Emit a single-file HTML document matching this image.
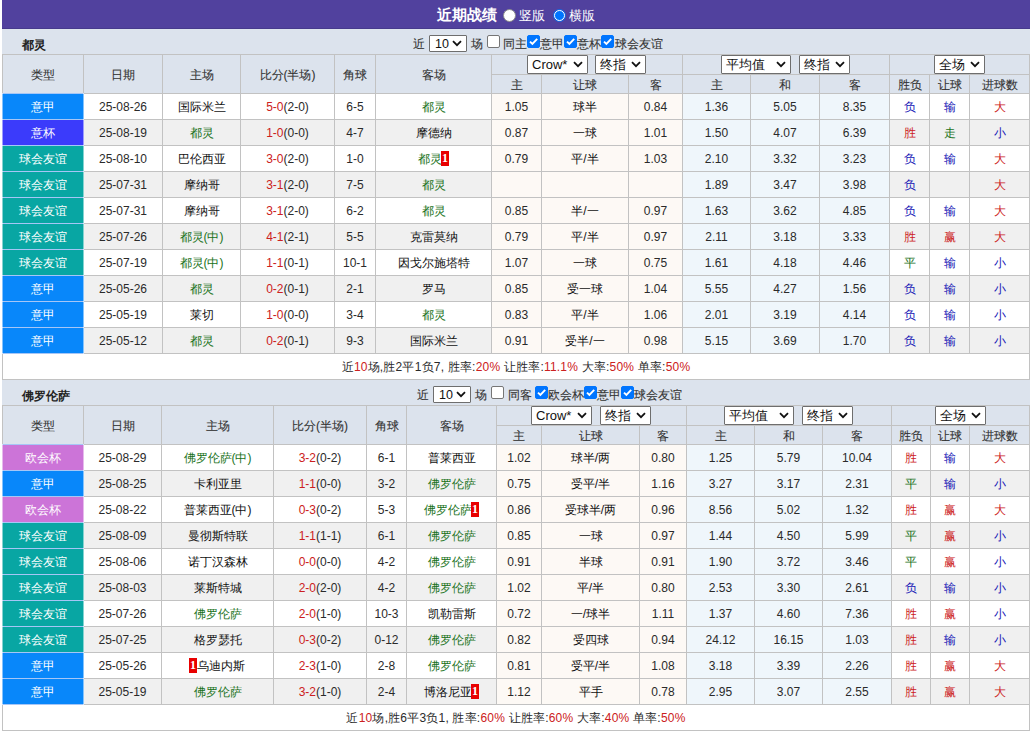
<!DOCTYPE html><html><head><meta charset="utf-8"><style>
*{margin:0;padding:0;box-sizing:border-box}
html,body{width:1030px;height:732px;overflow:hidden;background:#fff}
body{position:relative;font-family:"Liberation Sans",sans-serif;font-size:12px;color:#333}
body>div{position:absolute}
.tn{font-weight:bold;color:#222;font-size:12px;line-height:14px;white-space:nowrap}
.tx{color:#333;-webkit-text-stroke:0.1px;line-height:14px;white-space:nowrap}
.hc{text-align:center;color:#333;-webkit-text-stroke:0.1px;white-space:nowrap;position:absolute}
.dc{text-align:center;white-space:nowrap;overflow:hidden;color:#2a2a2a}
.cj{color:#111}
.tw{color:#fff}
.sm{letter-spacing:0.2px}
.g{color:#197219}
.rc{display:inline-block;background:#e80000;color:#fff;font-weight:bold;font-family:'Liberation Serif',serif;font-size:12px;line-height:15px;height:15px;width:8px;text-align:center;vertical-align:1px;margin-left:-1px}
.sel{position:absolute;background:#fff;border:1px solid #6e6e6e;border-radius:1px;font-size:13px;color:#111;white-space:nowrap}
.sel .sl{position:absolute;left:4px;top:0px;line-height:17px}
.sel .chev{position:absolute;right:4px;top:5px}
.s10 .sl{left:5px;line-height:16px;font-size:12.5px;letter-spacing:0}
.s10 .chev{top:4px}
.cb{position:absolute;width:13px;height:13px;border:1px solid #767676;border-radius:2px;background:#fff}
.cb.on{background:#0075ff;border-color:#0075ff}
.cb svg{position:absolute;left:-1px;top:-1px}
</style></head><body><div style="left:2px;top:0px;width:1028px;height:29px;background:#51419e"></div>
<div style="left:2px;top:28px;width:1028px;height:1px;background:#463a8c"></div>
<div style="left:2px;top:29px;width:1028px;height:1px;background:#e2defb"></div>
<div style="left:437px;top:6px;color:#fff;font-weight:bold;font-size:15px;line-height:18px;white-space:nowrap">近期战绩</div>
<div style="left:503px;top:9px;width:13px;height:13px;border-radius:50%;background:#fff;border:1px solid #8a8a8a"></div>
<div style="left:519px;top:8px;color:#fff;font-size:13px;line-height:16px;white-space:nowrap">竖版</div>
<div style="left:553px;top:9px;width:13px;height:13px;border-radius:50%;background:#1a66e0"><div style="position:absolute;left:1px;top:1px;width:11px;height:11px;border-radius:50%;border:1.5px solid #fff;background:#0075ff"></div></div>
<div style="left:569px;top:8px;color:#fff;font-size:13px;line-height:16px;white-space:nowrap">横版</div>
<div style="left:2px;top:29px;width:1028px;height:25px;background:#dce3ed"></div>
<div class="tn" style="left:22px;top:38px">都灵</div>
<div class="tx" style="left:413px;top:37px">近</div>
<div class="sel s10" style="left:429px;top:35px;width:38px;height:17px;"><span class="sl">10</span><svg class="chev" width="10" height="7" viewBox="0 0 10 7"><path d="M1 1.2 L5 5.2 L9 1.2" fill="none" stroke="#111" stroke-width="1.8"/></svg></div>
<div class="tx" style="left:471px;top:37px">场</div>
<div class="cb" style="left:487px;top:35px"></div>
<div class="tx" style="left:503px;top:37px">同主</div>
<div class="cb on" style="left:527px;top:35px"><svg width="13" height="13" viewBox="0 0 13 13"><path d="M3 6.6 L5.4 9 L10.2 3.8" fill="none" stroke="#fff" stroke-width="1.9"/></svg></div>
<div class="tx" style="left:540px;top:37px">意甲</div>
<div class="cb on" style="left:564px;top:35px"><svg width="13" height="13" viewBox="0 0 13 13"><path d="M3 6.6 L5.4 9 L10.2 3.8" fill="none" stroke="#fff" stroke-width="1.9"/></svg></div>
<div class="tx" style="left:577px;top:37px">意杯</div>
<div class="cb on" style="left:601px;top:35px"><svg width="13" height="13" viewBox="0 0 13 13"><path d="M3 6.6 L5.4 9 L10.2 3.8" fill="none" stroke="#fff" stroke-width="1.9"/></svg></div>
<div class="tx" style="left:615px;top:37px">球会友谊</div>
<div style="left:2px;top:54px;width:1028px;height:39px;background:#dce3ed"></div>
<div class="hc" style="left:3px;top:56px;width:80px;height:37px;line-height:38px">类型</div>
<div class="hc" style="left:84px;top:56px;width:78px;height:37px;line-height:38px">日期</div>
<div class="hc" style="left:163px;top:56px;width:77px;height:37px;line-height:38px">主场</div>
<div class="hc" style="left:241px;top:56px;width:93px;height:37px;line-height:38px">比分(半场)</div>
<div class="hc" style="left:335px;top:56px;width:40px;height:37px;line-height:38px">角球</div>
<div class="hc" style="left:376px;top:56px;width:115px;height:37px;line-height:38px">客场</div>
<div class="hc" style="left:492px;top:76px;width:49px;height:17px;line-height:18px">主</div>
<div class="hc" style="left:542px;top:76px;width:86px;height:17px;line-height:18px">让球</div>
<div class="hc" style="left:629px;top:76px;width:53px;height:17px;line-height:18px">客</div>
<div class="hc" style="left:683px;top:76px;width:67px;height:17px;line-height:18px">主</div>
<div class="hc" style="left:751px;top:76px;width:68px;height:17px;line-height:18px">和</div>
<div class="hc" style="left:820px;top:76px;width:69px;height:17px;line-height:18px">客</div>
<div class="hc" style="left:890px;top:76px;width:39px;height:17px;line-height:18px">胜负</div>
<div class="hc" style="left:930px;top:76px;width:39px;height:17px;line-height:18px">让球</div>
<div class="hc" style="left:970px;top:76px;width:59px;height:17px;line-height:18px">进球数</div>
<div class="sel" style="left:527px;top:55px;width:61px;height:19px;"><span class="sl">Crow*</span><svg class="chev" width="10" height="7" viewBox="0 0 10 7"><path d="M1 1.2 L5 5.2 L9 1.2" fill="none" stroke="#111" stroke-width="1.8"/></svg></div>
<div class="sel" style="left:595px;top:55px;width:51px;height:19px;"><span class="sl">终指</span><svg class="chev" width="10" height="7" viewBox="0 0 10 7"><path d="M1 1.2 L5 5.2 L9 1.2" fill="none" stroke="#111" stroke-width="1.8"/></svg></div>
<div class="sel" style="left:721px;top:55px;width:70px;height:19px;"><span class="sl">平均值</span><svg class="chev" width="10" height="7" viewBox="0 0 10 7"><path d="M1 1.2 L5 5.2 L9 1.2" fill="none" stroke="#111" stroke-width="1.8"/></svg></div>
<div class="sel" style="left:799px;top:55px;width:51px;height:19px;"><span class="sl">终指</span><svg class="chev" width="10" height="7" viewBox="0 0 10 7"><path d="M1 1.2 L5 5.2 L9 1.2" fill="none" stroke="#111" stroke-width="1.8"/></svg></div>
<div class="sel" style="left:934px;top:55px;width:51px;height:19px;"><span class="sl">全场</span><svg class="chev" width="10" height="7" viewBox="0 0 10 7"><path d="M1 1.2 L5 5.2 L9 1.2" fill="none" stroke="#111" stroke-width="1.8"/></svg></div>
<div class="dc cj" style="left:3px;top:94px;width:80px;height:25px;line-height:27px;background:#0887fa"><span class="tw">意甲</span></div>
<div class="dc" style="left:84px;top:94px;width:78px;height:25px;line-height:27px;background:#fff">25-08-26</div>
<div class="dc cj" style="left:163px;top:94px;width:77px;height:25px;line-height:27px;background:#fff"><span class="">国际米兰</span></div>
<div class="dc" style="left:241px;top:94px;width:93px;height:25px;line-height:27px;background:#fff"><span style="color:#cc2020">5-0</span>(2-0)</div>
<div class="dc" style="left:335px;top:94px;width:40px;height:25px;line-height:27px;background:#fff">6-5</div>
<div class="dc cj" style="left:376px;top:94px;width:115px;height:25px;line-height:27px;background:#fff"><span class="g">都灵</span></div>
<div class="dc" style="left:492px;top:94px;width:49px;height:25px;line-height:27px;background:#fdf9f5">1.05</div>
<div class="dc cj" style="left:542px;top:94px;width:86px;height:25px;line-height:27px;background:#fdf9f5">球半</div>
<div class="dc" style="left:629px;top:94px;width:53px;height:25px;line-height:27px;background:#fdf9f5">0.84</div>
<div class="dc" style="left:683px;top:94px;width:67px;height:25px;line-height:27px;background:#eff6fb">1.36</div>
<div class="dc" style="left:751px;top:94px;width:68px;height:25px;line-height:27px;background:#eff6fb">5.05</div>
<div class="dc" style="left:820px;top:94px;width:69px;height:25px;line-height:27px;background:#eff6fb">8.35</div>
<div class="dc cj" style="left:890px;top:94px;width:39px;height:25px;line-height:27px;background:#fff"><span style="color:#1515b5">负</span></div>
<div class="dc cj" style="left:930px;top:94px;width:39px;height:25px;line-height:27px;background:#fff"><span style="color:#1515b5">输</span></div>
<div class="dc cj" style="left:970px;top:94px;width:59px;height:25px;line-height:27px;background:#fff"><span style="color:#cc2020">大</span></div>
<div class="dc cj" style="left:3px;top:120px;width:80px;height:25px;line-height:27px;background:#3b3bfb"><span class="tw">意杯</span></div>
<div class="dc" style="left:84px;top:120px;width:78px;height:25px;line-height:27px;background:#f0f0f0">25-08-19</div>
<div class="dc cj" style="left:163px;top:120px;width:77px;height:25px;line-height:27px;background:#f0f0f0"><span class="g">都灵</span></div>
<div class="dc" style="left:241px;top:120px;width:93px;height:25px;line-height:27px;background:#f0f0f0"><span style="color:#cc2020">1-0</span>(0-0)</div>
<div class="dc" style="left:335px;top:120px;width:40px;height:25px;line-height:27px;background:#f0f0f0">4-7</div>
<div class="dc cj" style="left:376px;top:120px;width:115px;height:25px;line-height:27px;background:#f0f0f0"><span class="">摩德纳</span></div>
<div class="dc" style="left:492px;top:120px;width:49px;height:25px;line-height:27px;background:#fdf9f5">0.87</div>
<div class="dc cj" style="left:542px;top:120px;width:86px;height:25px;line-height:27px;background:#fdf9f5">一球</div>
<div class="dc" style="left:629px;top:120px;width:53px;height:25px;line-height:27px;background:#fdf9f5">1.01</div>
<div class="dc" style="left:683px;top:120px;width:67px;height:25px;line-height:27px;background:#eff6fb">1.50</div>
<div class="dc" style="left:751px;top:120px;width:68px;height:25px;line-height:27px;background:#eff6fb">4.07</div>
<div class="dc" style="left:820px;top:120px;width:69px;height:25px;line-height:27px;background:#eff6fb">6.39</div>
<div class="dc cj" style="left:890px;top:120px;width:39px;height:25px;line-height:27px;background:#f0f0f0"><span style="color:#cc2020">胜</span></div>
<div class="dc cj" style="left:930px;top:120px;width:39px;height:25px;line-height:27px;background:#f0f0f0"><span style="color:#197219">走</span></div>
<div class="dc cj" style="left:970px;top:120px;width:59px;height:25px;line-height:27px;background:#f0f0f0"><span style="color:#1515b5">小</span></div>
<div class="dc cj" style="left:3px;top:146px;width:80px;height:25px;line-height:27px;background:#08a6a3"><span class="tw">球会友谊</span></div>
<div class="dc" style="left:84px;top:146px;width:78px;height:25px;line-height:27px;background:#fff">25-08-10</div>
<div class="dc cj" style="left:163px;top:146px;width:77px;height:25px;line-height:27px;background:#fff"><span class="">巴伦西亚</span></div>
<div class="dc" style="left:241px;top:146px;width:93px;height:25px;line-height:27px;background:#fff"><span style="color:#cc2020">3-0</span>(2-0)</div>
<div class="dc" style="left:335px;top:146px;width:40px;height:25px;line-height:27px;background:#fff">1-0</div>
<div class="dc cj" style="left:376px;top:146px;width:115px;height:25px;line-height:27px;background:#fff"><span class="g">都灵<b class="rc">1</b></span></div>
<div class="dc" style="left:492px;top:146px;width:49px;height:25px;line-height:27px;background:#fdf9f5">0.79</div>
<div class="dc cj" style="left:542px;top:146px;width:86px;height:25px;line-height:27px;background:#fdf9f5">平/半</div>
<div class="dc" style="left:629px;top:146px;width:53px;height:25px;line-height:27px;background:#fdf9f5">1.03</div>
<div class="dc" style="left:683px;top:146px;width:67px;height:25px;line-height:27px;background:#eff6fb">2.10</div>
<div class="dc" style="left:751px;top:146px;width:68px;height:25px;line-height:27px;background:#eff6fb">3.32</div>
<div class="dc" style="left:820px;top:146px;width:69px;height:25px;line-height:27px;background:#eff6fb">3.23</div>
<div class="dc cj" style="left:890px;top:146px;width:39px;height:25px;line-height:27px;background:#fff"><span style="color:#1515b5">负</span></div>
<div class="dc cj" style="left:930px;top:146px;width:39px;height:25px;line-height:27px;background:#fff"><span style="color:#1515b5">输</span></div>
<div class="dc cj" style="left:970px;top:146px;width:59px;height:25px;line-height:27px;background:#fff"><span style="color:#cc2020">大</span></div>
<div class="dc cj" style="left:3px;top:172px;width:80px;height:25px;line-height:27px;background:#08a6a3"><span class="tw">球会友谊</span></div>
<div class="dc" style="left:84px;top:172px;width:78px;height:25px;line-height:27px;background:#f0f0f0">25-07-31</div>
<div class="dc cj" style="left:163px;top:172px;width:77px;height:25px;line-height:27px;background:#f0f0f0"><span class="">摩纳哥</span></div>
<div class="dc" style="left:241px;top:172px;width:93px;height:25px;line-height:27px;background:#f0f0f0"><span style="color:#cc2020">3-1</span>(2-0)</div>
<div class="dc" style="left:335px;top:172px;width:40px;height:25px;line-height:27px;background:#f0f0f0">7-5</div>
<div class="dc cj" style="left:376px;top:172px;width:115px;height:25px;line-height:27px;background:#f0f0f0"><span class="g">都灵</span></div>
<div class="dc" style="left:492px;top:172px;width:49px;height:25px;line-height:27px;background:#fdf9f5"></div>
<div class="dc cj" style="left:542px;top:172px;width:86px;height:25px;line-height:27px;background:#fdf9f5"></div>
<div class="dc" style="left:629px;top:172px;width:53px;height:25px;line-height:27px;background:#fdf9f5"></div>
<div class="dc" style="left:683px;top:172px;width:67px;height:25px;line-height:27px;background:#eff6fb">1.89</div>
<div class="dc" style="left:751px;top:172px;width:68px;height:25px;line-height:27px;background:#eff6fb">3.47</div>
<div class="dc" style="left:820px;top:172px;width:69px;height:25px;line-height:27px;background:#eff6fb">3.98</div>
<div class="dc cj" style="left:890px;top:172px;width:39px;height:25px;line-height:27px;background:#f0f0f0"><span style="color:#1515b5">负</span></div>
<div class="dc cj" style="left:930px;top:172px;width:39px;height:25px;line-height:27px;background:#f0f0f0"><span style="color:#333"></span></div>
<div class="dc cj" style="left:970px;top:172px;width:59px;height:25px;line-height:27px;background:#f0f0f0"><span style="color:#cc2020">大</span></div>
<div class="dc cj" style="left:3px;top:198px;width:80px;height:25px;line-height:27px;background:#08a6a3"><span class="tw">球会友谊</span></div>
<div class="dc" style="left:84px;top:198px;width:78px;height:25px;line-height:27px;background:#fff">25-07-31</div>
<div class="dc cj" style="left:163px;top:198px;width:77px;height:25px;line-height:27px;background:#fff"><span class="">摩纳哥</span></div>
<div class="dc" style="left:241px;top:198px;width:93px;height:25px;line-height:27px;background:#fff"><span style="color:#cc2020">3-1</span>(2-0)</div>
<div class="dc" style="left:335px;top:198px;width:40px;height:25px;line-height:27px;background:#fff">6-2</div>
<div class="dc cj" style="left:376px;top:198px;width:115px;height:25px;line-height:27px;background:#fff"><span class="g">都灵</span></div>
<div class="dc" style="left:492px;top:198px;width:49px;height:25px;line-height:27px;background:#fdf9f5">0.85</div>
<div class="dc cj" style="left:542px;top:198px;width:86px;height:25px;line-height:27px;background:#fdf9f5">半/一</div>
<div class="dc" style="left:629px;top:198px;width:53px;height:25px;line-height:27px;background:#fdf9f5">0.97</div>
<div class="dc" style="left:683px;top:198px;width:67px;height:25px;line-height:27px;background:#eff6fb">1.63</div>
<div class="dc" style="left:751px;top:198px;width:68px;height:25px;line-height:27px;background:#eff6fb">3.62</div>
<div class="dc" style="left:820px;top:198px;width:69px;height:25px;line-height:27px;background:#eff6fb">4.85</div>
<div class="dc cj" style="left:890px;top:198px;width:39px;height:25px;line-height:27px;background:#fff"><span style="color:#1515b5">负</span></div>
<div class="dc cj" style="left:930px;top:198px;width:39px;height:25px;line-height:27px;background:#fff"><span style="color:#1515b5">输</span></div>
<div class="dc cj" style="left:970px;top:198px;width:59px;height:25px;line-height:27px;background:#fff"><span style="color:#cc2020">大</span></div>
<div class="dc cj" style="left:3px;top:224px;width:80px;height:25px;line-height:27px;background:#08a6a3"><span class="tw">球会友谊</span></div>
<div class="dc" style="left:84px;top:224px;width:78px;height:25px;line-height:27px;background:#f0f0f0">25-07-26</div>
<div class="dc cj" style="left:163px;top:224px;width:77px;height:25px;line-height:27px;background:#f0f0f0"><span class="g">都灵(中)</span></div>
<div class="dc" style="left:241px;top:224px;width:93px;height:25px;line-height:27px;background:#f0f0f0"><span style="color:#cc2020">4-1</span>(2-1)</div>
<div class="dc" style="left:335px;top:224px;width:40px;height:25px;line-height:27px;background:#f0f0f0">5-5</div>
<div class="dc cj" style="left:376px;top:224px;width:115px;height:25px;line-height:27px;background:#f0f0f0"><span class="">克雷莫纳</span></div>
<div class="dc" style="left:492px;top:224px;width:49px;height:25px;line-height:27px;background:#fdf9f5">0.79</div>
<div class="dc cj" style="left:542px;top:224px;width:86px;height:25px;line-height:27px;background:#fdf9f5">平/半</div>
<div class="dc" style="left:629px;top:224px;width:53px;height:25px;line-height:27px;background:#fdf9f5">0.97</div>
<div class="dc" style="left:683px;top:224px;width:67px;height:25px;line-height:27px;background:#eff6fb">2.11</div>
<div class="dc" style="left:751px;top:224px;width:68px;height:25px;line-height:27px;background:#eff6fb">3.18</div>
<div class="dc" style="left:820px;top:224px;width:69px;height:25px;line-height:27px;background:#eff6fb">3.33</div>
<div class="dc cj" style="left:890px;top:224px;width:39px;height:25px;line-height:27px;background:#f0f0f0"><span style="color:#cc2020">胜</span></div>
<div class="dc cj" style="left:930px;top:224px;width:39px;height:25px;line-height:27px;background:#f0f0f0"><span style="color:#cc2020">赢</span></div>
<div class="dc cj" style="left:970px;top:224px;width:59px;height:25px;line-height:27px;background:#f0f0f0"><span style="color:#cc2020">大</span></div>
<div class="dc cj" style="left:3px;top:250px;width:80px;height:25px;line-height:27px;background:#08a6a3"><span class="tw">球会友谊</span></div>
<div class="dc" style="left:84px;top:250px;width:78px;height:25px;line-height:27px;background:#fff">25-07-19</div>
<div class="dc cj" style="left:163px;top:250px;width:77px;height:25px;line-height:27px;background:#fff"><span class="g">都灵(中)</span></div>
<div class="dc" style="left:241px;top:250px;width:93px;height:25px;line-height:27px;background:#fff"><span style="color:#cc2020">1-1</span>(0-1)</div>
<div class="dc" style="left:335px;top:250px;width:40px;height:25px;line-height:27px;background:#fff">10-1</div>
<div class="dc cj" style="left:376px;top:250px;width:115px;height:25px;line-height:27px;background:#fff"><span class="">因戈尔施塔特</span></div>
<div class="dc" style="left:492px;top:250px;width:49px;height:25px;line-height:27px;background:#fdf9f5">1.07</div>
<div class="dc cj" style="left:542px;top:250px;width:86px;height:25px;line-height:27px;background:#fdf9f5">一球</div>
<div class="dc" style="left:629px;top:250px;width:53px;height:25px;line-height:27px;background:#fdf9f5">0.75</div>
<div class="dc" style="left:683px;top:250px;width:67px;height:25px;line-height:27px;background:#eff6fb">1.61</div>
<div class="dc" style="left:751px;top:250px;width:68px;height:25px;line-height:27px;background:#eff6fb">4.18</div>
<div class="dc" style="left:820px;top:250px;width:69px;height:25px;line-height:27px;background:#eff6fb">4.46</div>
<div class="dc cj" style="left:890px;top:250px;width:39px;height:25px;line-height:27px;background:#fff"><span style="color:#197219">平</span></div>
<div class="dc cj" style="left:930px;top:250px;width:39px;height:25px;line-height:27px;background:#fff"><span style="color:#1515b5">输</span></div>
<div class="dc cj" style="left:970px;top:250px;width:59px;height:25px;line-height:27px;background:#fff"><span style="color:#1515b5">小</span></div>
<div class="dc cj" style="left:3px;top:276px;width:80px;height:25px;line-height:27px;background:#0887fa"><span class="tw">意甲</span></div>
<div class="dc" style="left:84px;top:276px;width:78px;height:25px;line-height:27px;background:#f0f0f0">25-05-26</div>
<div class="dc cj" style="left:163px;top:276px;width:77px;height:25px;line-height:27px;background:#f0f0f0"><span class="g">都灵</span></div>
<div class="dc" style="left:241px;top:276px;width:93px;height:25px;line-height:27px;background:#f0f0f0"><span style="color:#cc2020">0-2</span>(0-1)</div>
<div class="dc" style="left:335px;top:276px;width:40px;height:25px;line-height:27px;background:#f0f0f0">2-1</div>
<div class="dc cj" style="left:376px;top:276px;width:115px;height:25px;line-height:27px;background:#f0f0f0"><span class="">罗马</span></div>
<div class="dc" style="left:492px;top:276px;width:49px;height:25px;line-height:27px;background:#fdf9f5">0.85</div>
<div class="dc cj" style="left:542px;top:276px;width:86px;height:25px;line-height:27px;background:#fdf9f5">受一球</div>
<div class="dc" style="left:629px;top:276px;width:53px;height:25px;line-height:27px;background:#fdf9f5">1.04</div>
<div class="dc" style="left:683px;top:276px;width:67px;height:25px;line-height:27px;background:#eff6fb">5.55</div>
<div class="dc" style="left:751px;top:276px;width:68px;height:25px;line-height:27px;background:#eff6fb">4.27</div>
<div class="dc" style="left:820px;top:276px;width:69px;height:25px;line-height:27px;background:#eff6fb">1.56</div>
<div class="dc cj" style="left:890px;top:276px;width:39px;height:25px;line-height:27px;background:#f0f0f0"><span style="color:#1515b5">负</span></div>
<div class="dc cj" style="left:930px;top:276px;width:39px;height:25px;line-height:27px;background:#f0f0f0"><span style="color:#1515b5">输</span></div>
<div class="dc cj" style="left:970px;top:276px;width:59px;height:25px;line-height:27px;background:#f0f0f0"><span style="color:#1515b5">小</span></div>
<div class="dc cj" style="left:3px;top:302px;width:80px;height:25px;line-height:27px;background:#0887fa"><span class="tw">意甲</span></div>
<div class="dc" style="left:84px;top:302px;width:78px;height:25px;line-height:27px;background:#fff">25-05-19</div>
<div class="dc cj" style="left:163px;top:302px;width:77px;height:25px;line-height:27px;background:#fff"><span class="">莱切</span></div>
<div class="dc" style="left:241px;top:302px;width:93px;height:25px;line-height:27px;background:#fff"><span style="color:#cc2020">1-0</span>(0-0)</div>
<div class="dc" style="left:335px;top:302px;width:40px;height:25px;line-height:27px;background:#fff">3-4</div>
<div class="dc cj" style="left:376px;top:302px;width:115px;height:25px;line-height:27px;background:#fff"><span class="g">都灵</span></div>
<div class="dc" style="left:492px;top:302px;width:49px;height:25px;line-height:27px;background:#fdf9f5">0.83</div>
<div class="dc cj" style="left:542px;top:302px;width:86px;height:25px;line-height:27px;background:#fdf9f5">平/半</div>
<div class="dc" style="left:629px;top:302px;width:53px;height:25px;line-height:27px;background:#fdf9f5">1.06</div>
<div class="dc" style="left:683px;top:302px;width:67px;height:25px;line-height:27px;background:#eff6fb">2.01</div>
<div class="dc" style="left:751px;top:302px;width:68px;height:25px;line-height:27px;background:#eff6fb">3.19</div>
<div class="dc" style="left:820px;top:302px;width:69px;height:25px;line-height:27px;background:#eff6fb">4.14</div>
<div class="dc cj" style="left:890px;top:302px;width:39px;height:25px;line-height:27px;background:#fff"><span style="color:#1515b5">负</span></div>
<div class="dc cj" style="left:930px;top:302px;width:39px;height:25px;line-height:27px;background:#fff"><span style="color:#1515b5">输</span></div>
<div class="dc cj" style="left:970px;top:302px;width:59px;height:25px;line-height:27px;background:#fff"><span style="color:#1515b5">小</span></div>
<div class="dc cj" style="left:3px;top:328px;width:80px;height:25px;line-height:27px;background:#0887fa"><span class="tw">意甲</span></div>
<div class="dc" style="left:84px;top:328px;width:78px;height:25px;line-height:27px;background:#f0f0f0">25-05-12</div>
<div class="dc cj" style="left:163px;top:328px;width:77px;height:25px;line-height:27px;background:#f0f0f0"><span class="g">都灵</span></div>
<div class="dc" style="left:241px;top:328px;width:93px;height:25px;line-height:27px;background:#f0f0f0"><span style="color:#cc2020">0-2</span>(0-1)</div>
<div class="dc" style="left:335px;top:328px;width:40px;height:25px;line-height:27px;background:#f0f0f0">9-3</div>
<div class="dc cj" style="left:376px;top:328px;width:115px;height:25px;line-height:27px;background:#f0f0f0"><span class="">国际米兰</span></div>
<div class="dc" style="left:492px;top:328px;width:49px;height:25px;line-height:27px;background:#fdf9f5">0.91</div>
<div class="dc cj" style="left:542px;top:328px;width:86px;height:25px;line-height:27px;background:#fdf9f5">受半/一</div>
<div class="dc" style="left:629px;top:328px;width:53px;height:25px;line-height:27px;background:#fdf9f5">0.98</div>
<div class="dc" style="left:683px;top:328px;width:67px;height:25px;line-height:27px;background:#eff6fb">5.15</div>
<div class="dc" style="left:751px;top:328px;width:68px;height:25px;line-height:27px;background:#eff6fb">3.69</div>
<div class="dc" style="left:820px;top:328px;width:69px;height:25px;line-height:27px;background:#eff6fb">1.70</div>
<div class="dc cj" style="left:890px;top:328px;width:39px;height:25px;line-height:27px;background:#f0f0f0"><span style="color:#1515b5">负</span></div>
<div class="dc cj" style="left:930px;top:328px;width:39px;height:25px;line-height:27px;background:#f0f0f0"><span style="color:#1515b5">输</span></div>
<div class="dc cj" style="left:970px;top:328px;width:59px;height:25px;line-height:27px;background:#f0f0f0"><span style="color:#1515b5">小</span></div>
<div class="dc sm" style="left:3px;top:354px;width:1026px;height:25px;line-height:26px;background:#fff">近<span style="color:#cc2020">10</span>场,胜2平1负7, 胜率:<span style="color:#cc2020">20%</span> 让胜率:<span style="color:#cc2020">11.1%</span> 大率:<span style="color:#cc2020">50%</span> 单率:<span style="color:#cc2020">50%</span></div>
<div style="left:2px;top:54px;width:1028px;height:1px;background:#c2c2c2"></div>
<div style="left:2px;top:93px;width:1028px;height:1px;background:#c2c2c2"></div>
<div style="left:2px;top:119px;width:1028px;height:1px;background:#c2c2c2"></div>
<div style="left:2px;top:145px;width:1028px;height:1px;background:#c2c2c2"></div>
<div style="left:2px;top:171px;width:1028px;height:1px;background:#c2c2c2"></div>
<div style="left:2px;top:197px;width:1028px;height:1px;background:#c2c2c2"></div>
<div style="left:2px;top:223px;width:1028px;height:1px;background:#c2c2c2"></div>
<div style="left:2px;top:249px;width:1028px;height:1px;background:#c2c2c2"></div>
<div style="left:2px;top:275px;width:1028px;height:1px;background:#c2c2c2"></div>
<div style="left:2px;top:301px;width:1028px;height:1px;background:#c2c2c2"></div>
<div style="left:2px;top:327px;width:1028px;height:1px;background:#c2c2c2"></div>
<div style="left:2px;top:353px;width:1028px;height:1px;background:#c2c2c2"></div>
<div style="left:2px;top:379px;width:1028px;height:1px;background:#c2c2c2"></div>
<div style="left:491px;top:74px;width:539px;height:1px;background:#c2c2c2"></div>
<div style="left:2px;top:54px;width:1px;height:326px;background:#c2c2c2"></div>
<div style="left:83px;top:54px;width:1px;height:299px;background:#c2c2c2"></div>
<div style="left:162px;top:54px;width:1px;height:299px;background:#c2c2c2"></div>
<div style="left:240px;top:54px;width:1px;height:299px;background:#c2c2c2"></div>
<div style="left:334px;top:54px;width:1px;height:299px;background:#c2c2c2"></div>
<div style="left:375px;top:54px;width:1px;height:299px;background:#c2c2c2"></div>
<div style="left:491px;top:54px;width:1px;height:299px;background:#c2c2c2"></div>
<div style="left:541px;top:74px;width:1px;height:279px;background:#c2c2c2"></div>
<div style="left:628px;top:74px;width:1px;height:279px;background:#c2c2c2"></div>
<div style="left:682px;top:54px;width:1px;height:299px;background:#c2c2c2"></div>
<div style="left:750px;top:74px;width:1px;height:279px;background:#c2c2c2"></div>
<div style="left:819px;top:74px;width:1px;height:279px;background:#c2c2c2"></div>
<div style="left:889px;top:54px;width:1px;height:299px;background:#c2c2c2"></div>
<div style="left:929px;top:74px;width:1px;height:279px;background:#c2c2c2"></div>
<div style="left:969px;top:74px;width:1px;height:279px;background:#c2c2c2"></div>
<div style="left:1029px;top:54px;width:1px;height:326px;background:#c2c2c2"></div>
<div style="left:2px;top:93px;width:82px;height:27px;background:#0887fa"></div>
<div style="left:3px;top:94px;width:80px;height:25px;display:flex;align-items:center;justify-content:center;padding-top:2px"><span class="tw cj">意甲</span></div>
<div style="left:2px;top:119px;width:82px;height:27px;background:#3b3bfb"></div>
<div style="left:3px;top:120px;width:80px;height:25px;display:flex;align-items:center;justify-content:center;padding-top:2px"><span class="tw cj">意杯</span></div>
<div style="left:2px;top:145px;width:82px;height:27px;background:#08a6a3"></div>
<div style="left:3px;top:146px;width:80px;height:25px;display:flex;align-items:center;justify-content:center;padding-top:2px"><span class="tw cj">球会友谊</span></div>
<div style="left:2px;top:171px;width:82px;height:27px;background:#08a6a3"></div>
<div style="left:3px;top:172px;width:80px;height:25px;display:flex;align-items:center;justify-content:center;padding-top:2px"><span class="tw cj">球会友谊</span></div>
<div style="left:2px;top:197px;width:82px;height:27px;background:#08a6a3"></div>
<div style="left:3px;top:198px;width:80px;height:25px;display:flex;align-items:center;justify-content:center;padding-top:2px"><span class="tw cj">球会友谊</span></div>
<div style="left:2px;top:223px;width:82px;height:27px;background:#08a6a3"></div>
<div style="left:3px;top:224px;width:80px;height:25px;display:flex;align-items:center;justify-content:center;padding-top:2px"><span class="tw cj">球会友谊</span></div>
<div style="left:2px;top:249px;width:82px;height:27px;background:#08a6a3"></div>
<div style="left:3px;top:250px;width:80px;height:25px;display:flex;align-items:center;justify-content:center;padding-top:2px"><span class="tw cj">球会友谊</span></div>
<div style="left:2px;top:275px;width:82px;height:27px;background:#0887fa"></div>
<div style="left:3px;top:276px;width:80px;height:25px;display:flex;align-items:center;justify-content:center;padding-top:2px"><span class="tw cj">意甲</span></div>
<div style="left:2px;top:301px;width:82px;height:27px;background:#0887fa"></div>
<div style="left:3px;top:302px;width:80px;height:25px;display:flex;align-items:center;justify-content:center;padding-top:2px"><span class="tw cj">意甲</span></div>
<div style="left:2px;top:327px;width:82px;height:27px;background:#0887fa"></div>
<div style="left:3px;top:328px;width:80px;height:25px;display:flex;align-items:center;justify-content:center;padding-top:2px"><span class="tw cj">意甲</span></div>
<div style="left:2px;top:93px;width:82px;height:1px;background:#a6c6f6"></div>
<div style="left:2px;top:119px;width:82px;height:1px;background:#a6c6f6"></div>
<div style="left:2px;top:145px;width:82px;height:1px;background:#a6c6f6"></div>
<div style="left:2px;top:171px;width:82px;height:1px;background:#a6c6f6"></div>
<div style="left:2px;top:197px;width:82px;height:1px;background:#a6c6f6"></div>
<div style="left:2px;top:223px;width:82px;height:1px;background:#a6c6f6"></div>
<div style="left:2px;top:249px;width:82px;height:1px;background:#a6c6f6"></div>
<div style="left:2px;top:275px;width:82px;height:1px;background:#a6c6f6"></div>
<div style="left:2px;top:301px;width:82px;height:1px;background:#a6c6f6"></div>
<div style="left:2px;top:327px;width:82px;height:1px;background:#a6c6f6"></div>
<div style="left:2px;top:353px;width:82px;height:1px;background:#a6c6f6"></div>
<div style="left:2px;top:93px;width:1px;height:261px;background:rgba(255,255,255,0.5)"></div>
<div style="left:83px;top:93px;width:1px;height:261px;background:rgba(255,255,255,0.5)"></div>
<div style="left:2px;top:380px;width:1028px;height:25px;background:#dce3ed"></div>
<div class="tn" style="left:22px;top:389px">佛罗伦萨</div>
<div class="tx" style="left:417px;top:388px">近</div>
<div class="sel s10" style="left:433px;top:386px;width:38px;height:17px;"><span class="sl">10</span><svg class="chev" width="10" height="7" viewBox="0 0 10 7"><path d="M1 1.2 L5 5.2 L9 1.2" fill="none" stroke="#111" stroke-width="1.8"/></svg></div>
<div class="tx" style="left:475px;top:388px">场</div>
<div class="cb" style="left:491px;top:386px"></div>
<div class="tx" style="left:508px;top:388px">同客</div>
<div class="cb on" style="left:535px;top:386px"><svg width="13" height="13" viewBox="0 0 13 13"><path d="M3 6.6 L5.4 9 L10.2 3.8" fill="none" stroke="#fff" stroke-width="1.9"/></svg></div>
<div class="tx" style="left:548px;top:388px">欧会杯</div>
<div class="cb on" style="left:584px;top:386px"><svg width="13" height="13" viewBox="0 0 13 13"><path d="M3 6.6 L5.4 9 L10.2 3.8" fill="none" stroke="#fff" stroke-width="1.9"/></svg></div>
<div class="tx" style="left:597px;top:388px">意甲</div>
<div class="cb on" style="left:621px;top:386px"><svg width="13" height="13" viewBox="0 0 13 13"><path d="M3 6.6 L5.4 9 L10.2 3.8" fill="none" stroke="#fff" stroke-width="1.9"/></svg></div>
<div class="tx" style="left:634px;top:388px">球会友谊</div>
<div style="left:2px;top:405px;width:1028px;height:39px;background:#dce3ed"></div>
<div class="hc" style="left:3px;top:407px;width:80px;height:37px;line-height:38px">类型</div>
<div class="hc" style="left:84px;top:407px;width:77px;height:37px;line-height:38px">日期</div>
<div class="hc" style="left:162px;top:407px;width:111px;height:37px;line-height:38px">主场</div>
<div class="hc" style="left:274px;top:407px;width:92px;height:37px;line-height:38px">比分(半场)</div>
<div class="hc" style="left:367px;top:407px;width:39px;height:37px;line-height:38px">角球</div>
<div class="hc" style="left:407px;top:407px;width:89px;height:37px;line-height:38px">客场</div>
<div class="hc" style="left:497px;top:427px;width:44px;height:17px;line-height:18px">主</div>
<div class="hc" style="left:542px;top:427px;width:97px;height:17px;line-height:18px">让球</div>
<div class="hc" style="left:640px;top:427px;width:46px;height:17px;line-height:18px">客</div>
<div class="hc" style="left:687px;top:427px;width:67px;height:17px;line-height:18px">主</div>
<div class="hc" style="left:755px;top:427px;width:67px;height:17px;line-height:18px">和</div>
<div class="hc" style="left:823px;top:427px;width:68px;height:17px;line-height:18px">客</div>
<div class="hc" style="left:892px;top:427px;width:38px;height:17px;line-height:18px">胜负</div>
<div class="hc" style="left:931px;top:427px;width:38px;height:17px;line-height:18px">让球</div>
<div class="hc" style="left:970px;top:427px;width:59px;height:17px;line-height:18px">进球数</div>
<div class="sel" style="left:531px;top:406px;width:61px;height:19px;"><span class="sl">Crow*</span><svg class="chev" width="10" height="7" viewBox="0 0 10 7"><path d="M1 1.2 L5 5.2 L9 1.2" fill="none" stroke="#111" stroke-width="1.8"/></svg></div>
<div class="sel" style="left:600px;top:406px;width:51px;height:19px;"><span class="sl">终指</span><svg class="chev" width="10" height="7" viewBox="0 0 10 7"><path d="M1 1.2 L5 5.2 L9 1.2" fill="none" stroke="#111" stroke-width="1.8"/></svg></div>
<div class="sel" style="left:724px;top:406px;width:70px;height:19px;"><span class="sl">平均值</span><svg class="chev" width="10" height="7" viewBox="0 0 10 7"><path d="M1 1.2 L5 5.2 L9 1.2" fill="none" stroke="#111" stroke-width="1.8"/></svg></div>
<div class="sel" style="left:802px;top:406px;width:51px;height:19px;"><span class="sl">终指</span><svg class="chev" width="10" height="7" viewBox="0 0 10 7"><path d="M1 1.2 L5 5.2 L9 1.2" fill="none" stroke="#111" stroke-width="1.8"/></svg></div>
<div class="sel" style="left:935px;top:406px;width:51px;height:19px;"><span class="sl">全场</span><svg class="chev" width="10" height="7" viewBox="0 0 10 7"><path d="M1 1.2 L5 5.2 L9 1.2" fill="none" stroke="#111" stroke-width="1.8"/></svg></div>
<div class="dc cj" style="left:3px;top:445px;width:80px;height:25px;line-height:27px;background:#cc74d8"><span class="tw">欧会杯</span></div>
<div class="dc" style="left:84px;top:445px;width:77px;height:25px;line-height:27px;background:#fff">25-08-29</div>
<div class="dc cj" style="left:162px;top:445px;width:111px;height:25px;line-height:27px;background:#fff"><span class="g">佛罗伦萨(中)</span></div>
<div class="dc" style="left:274px;top:445px;width:92px;height:25px;line-height:27px;background:#fff"><span style="color:#cc2020">3-2</span>(0-2)</div>
<div class="dc" style="left:367px;top:445px;width:39px;height:25px;line-height:27px;background:#fff">6-1</div>
<div class="dc cj" style="left:407px;top:445px;width:89px;height:25px;line-height:27px;background:#fff"><span class="">普莱西亚</span></div>
<div class="dc" style="left:497px;top:445px;width:44px;height:25px;line-height:27px;background:#fdf9f5">1.02</div>
<div class="dc cj" style="left:542px;top:445px;width:97px;height:25px;line-height:27px;background:#fdf9f5">球半/两</div>
<div class="dc" style="left:640px;top:445px;width:46px;height:25px;line-height:27px;background:#fdf9f5">0.80</div>
<div class="dc" style="left:687px;top:445px;width:67px;height:25px;line-height:27px;background:#eff6fb">1.25</div>
<div class="dc" style="left:755px;top:445px;width:67px;height:25px;line-height:27px;background:#eff6fb">5.79</div>
<div class="dc" style="left:823px;top:445px;width:68px;height:25px;line-height:27px;background:#eff6fb">10.04</div>
<div class="dc cj" style="left:892px;top:445px;width:38px;height:25px;line-height:27px;background:#fff"><span style="color:#cc2020">胜</span></div>
<div class="dc cj" style="left:931px;top:445px;width:38px;height:25px;line-height:27px;background:#fff"><span style="color:#1515b5">输</span></div>
<div class="dc cj" style="left:970px;top:445px;width:59px;height:25px;line-height:27px;background:#fff"><span style="color:#cc2020">大</span></div>
<div class="dc cj" style="left:3px;top:471px;width:80px;height:25px;line-height:27px;background:#0887fa"><span class="tw">意甲</span></div>
<div class="dc" style="left:84px;top:471px;width:77px;height:25px;line-height:27px;background:#f0f0f0">25-08-25</div>
<div class="dc cj" style="left:162px;top:471px;width:111px;height:25px;line-height:27px;background:#f0f0f0"><span class="">卡利亚里</span></div>
<div class="dc" style="left:274px;top:471px;width:92px;height:25px;line-height:27px;background:#f0f0f0"><span style="color:#cc2020">1-1</span>(0-0)</div>
<div class="dc" style="left:367px;top:471px;width:39px;height:25px;line-height:27px;background:#f0f0f0">3-2</div>
<div class="dc cj" style="left:407px;top:471px;width:89px;height:25px;line-height:27px;background:#f0f0f0"><span class="g">佛罗伦萨</span></div>
<div class="dc" style="left:497px;top:471px;width:44px;height:25px;line-height:27px;background:#fdf9f5">0.75</div>
<div class="dc cj" style="left:542px;top:471px;width:97px;height:25px;line-height:27px;background:#fdf9f5">受平/半</div>
<div class="dc" style="left:640px;top:471px;width:46px;height:25px;line-height:27px;background:#fdf9f5">1.16</div>
<div class="dc" style="left:687px;top:471px;width:67px;height:25px;line-height:27px;background:#eff6fb">3.27</div>
<div class="dc" style="left:755px;top:471px;width:67px;height:25px;line-height:27px;background:#eff6fb">3.17</div>
<div class="dc" style="left:823px;top:471px;width:68px;height:25px;line-height:27px;background:#eff6fb">2.31</div>
<div class="dc cj" style="left:892px;top:471px;width:38px;height:25px;line-height:27px;background:#f0f0f0"><span style="color:#197219">平</span></div>
<div class="dc cj" style="left:931px;top:471px;width:38px;height:25px;line-height:27px;background:#f0f0f0"><span style="color:#1515b5">输</span></div>
<div class="dc cj" style="left:970px;top:471px;width:59px;height:25px;line-height:27px;background:#f0f0f0"><span style="color:#1515b5">小</span></div>
<div class="dc cj" style="left:3px;top:497px;width:80px;height:25px;line-height:27px;background:#cc74d8"><span class="tw">欧会杯</span></div>
<div class="dc" style="left:84px;top:497px;width:77px;height:25px;line-height:27px;background:#fff">25-08-22</div>
<div class="dc cj" style="left:162px;top:497px;width:111px;height:25px;line-height:27px;background:#fff"><span class="">普莱西亚(中)</span></div>
<div class="dc" style="left:274px;top:497px;width:92px;height:25px;line-height:27px;background:#fff"><span style="color:#cc2020">0-3</span>(0-2)</div>
<div class="dc" style="left:367px;top:497px;width:39px;height:25px;line-height:27px;background:#fff">5-3</div>
<div class="dc cj" style="left:407px;top:497px;width:89px;height:25px;line-height:27px;background:#fff"><span class="g">佛罗伦萨<b class="rc">1</b></span></div>
<div class="dc" style="left:497px;top:497px;width:44px;height:25px;line-height:27px;background:#fdf9f5">0.86</div>
<div class="dc cj" style="left:542px;top:497px;width:97px;height:25px;line-height:27px;background:#fdf9f5">受球半/两</div>
<div class="dc" style="left:640px;top:497px;width:46px;height:25px;line-height:27px;background:#fdf9f5">0.96</div>
<div class="dc" style="left:687px;top:497px;width:67px;height:25px;line-height:27px;background:#eff6fb">8.56</div>
<div class="dc" style="left:755px;top:497px;width:67px;height:25px;line-height:27px;background:#eff6fb">5.02</div>
<div class="dc" style="left:823px;top:497px;width:68px;height:25px;line-height:27px;background:#eff6fb">1.32</div>
<div class="dc cj" style="left:892px;top:497px;width:38px;height:25px;line-height:27px;background:#fff"><span style="color:#cc2020">胜</span></div>
<div class="dc cj" style="left:931px;top:497px;width:38px;height:25px;line-height:27px;background:#fff"><span style="color:#cc2020">赢</span></div>
<div class="dc cj" style="left:970px;top:497px;width:59px;height:25px;line-height:27px;background:#fff"><span style="color:#cc2020">大</span></div>
<div class="dc cj" style="left:3px;top:523px;width:80px;height:25px;line-height:27px;background:#08a6a3"><span class="tw">球会友谊</span></div>
<div class="dc" style="left:84px;top:523px;width:77px;height:25px;line-height:27px;background:#f0f0f0">25-08-09</div>
<div class="dc cj" style="left:162px;top:523px;width:111px;height:25px;line-height:27px;background:#f0f0f0"><span class="">曼彻斯特联</span></div>
<div class="dc" style="left:274px;top:523px;width:92px;height:25px;line-height:27px;background:#f0f0f0"><span style="color:#cc2020">1-1</span>(1-1)</div>
<div class="dc" style="left:367px;top:523px;width:39px;height:25px;line-height:27px;background:#f0f0f0">6-1</div>
<div class="dc cj" style="left:407px;top:523px;width:89px;height:25px;line-height:27px;background:#f0f0f0"><span class="g">佛罗伦萨</span></div>
<div class="dc" style="left:497px;top:523px;width:44px;height:25px;line-height:27px;background:#fdf9f5">0.85</div>
<div class="dc cj" style="left:542px;top:523px;width:97px;height:25px;line-height:27px;background:#fdf9f5">一球</div>
<div class="dc" style="left:640px;top:523px;width:46px;height:25px;line-height:27px;background:#fdf9f5">0.97</div>
<div class="dc" style="left:687px;top:523px;width:67px;height:25px;line-height:27px;background:#eff6fb">1.44</div>
<div class="dc" style="left:755px;top:523px;width:67px;height:25px;line-height:27px;background:#eff6fb">4.50</div>
<div class="dc" style="left:823px;top:523px;width:68px;height:25px;line-height:27px;background:#eff6fb">5.99</div>
<div class="dc cj" style="left:892px;top:523px;width:38px;height:25px;line-height:27px;background:#f0f0f0"><span style="color:#197219">平</span></div>
<div class="dc cj" style="left:931px;top:523px;width:38px;height:25px;line-height:27px;background:#f0f0f0"><span style="color:#cc2020">赢</span></div>
<div class="dc cj" style="left:970px;top:523px;width:59px;height:25px;line-height:27px;background:#f0f0f0"><span style="color:#1515b5">小</span></div>
<div class="dc cj" style="left:3px;top:549px;width:80px;height:25px;line-height:27px;background:#08a6a3"><span class="tw">球会友谊</span></div>
<div class="dc" style="left:84px;top:549px;width:77px;height:25px;line-height:27px;background:#fff">25-08-06</div>
<div class="dc cj" style="left:162px;top:549px;width:111px;height:25px;line-height:27px;background:#fff"><span class="">诺丁汉森林</span></div>
<div class="dc" style="left:274px;top:549px;width:92px;height:25px;line-height:27px;background:#fff"><span style="color:#cc2020">0-0</span>(0-0)</div>
<div class="dc" style="left:367px;top:549px;width:39px;height:25px;line-height:27px;background:#fff">4-2</div>
<div class="dc cj" style="left:407px;top:549px;width:89px;height:25px;line-height:27px;background:#fff"><span class="g">佛罗伦萨</span></div>
<div class="dc" style="left:497px;top:549px;width:44px;height:25px;line-height:27px;background:#fdf9f5">0.91</div>
<div class="dc cj" style="left:542px;top:549px;width:97px;height:25px;line-height:27px;background:#fdf9f5">半球</div>
<div class="dc" style="left:640px;top:549px;width:46px;height:25px;line-height:27px;background:#fdf9f5">0.91</div>
<div class="dc" style="left:687px;top:549px;width:67px;height:25px;line-height:27px;background:#eff6fb">1.90</div>
<div class="dc" style="left:755px;top:549px;width:67px;height:25px;line-height:27px;background:#eff6fb">3.72</div>
<div class="dc" style="left:823px;top:549px;width:68px;height:25px;line-height:27px;background:#eff6fb">3.46</div>
<div class="dc cj" style="left:892px;top:549px;width:38px;height:25px;line-height:27px;background:#fff"><span style="color:#197219">平</span></div>
<div class="dc cj" style="left:931px;top:549px;width:38px;height:25px;line-height:27px;background:#fff"><span style="color:#cc2020">赢</span></div>
<div class="dc cj" style="left:970px;top:549px;width:59px;height:25px;line-height:27px;background:#fff"><span style="color:#1515b5">小</span></div>
<div class="dc cj" style="left:3px;top:575px;width:80px;height:25px;line-height:27px;background:#08a6a3"><span class="tw">球会友谊</span></div>
<div class="dc" style="left:84px;top:575px;width:77px;height:25px;line-height:27px;background:#f0f0f0">25-08-03</div>
<div class="dc cj" style="left:162px;top:575px;width:111px;height:25px;line-height:27px;background:#f0f0f0"><span class="">莱斯特城</span></div>
<div class="dc" style="left:274px;top:575px;width:92px;height:25px;line-height:27px;background:#f0f0f0"><span style="color:#cc2020">2-0</span>(2-0)</div>
<div class="dc" style="left:367px;top:575px;width:39px;height:25px;line-height:27px;background:#f0f0f0">4-2</div>
<div class="dc cj" style="left:407px;top:575px;width:89px;height:25px;line-height:27px;background:#f0f0f0"><span class="g">佛罗伦萨</span></div>
<div class="dc" style="left:497px;top:575px;width:44px;height:25px;line-height:27px;background:#fdf9f5">1.02</div>
<div class="dc cj" style="left:542px;top:575px;width:97px;height:25px;line-height:27px;background:#fdf9f5">平/半</div>
<div class="dc" style="left:640px;top:575px;width:46px;height:25px;line-height:27px;background:#fdf9f5">0.80</div>
<div class="dc" style="left:687px;top:575px;width:67px;height:25px;line-height:27px;background:#eff6fb">2.53</div>
<div class="dc" style="left:755px;top:575px;width:67px;height:25px;line-height:27px;background:#eff6fb">3.30</div>
<div class="dc" style="left:823px;top:575px;width:68px;height:25px;line-height:27px;background:#eff6fb">2.61</div>
<div class="dc cj" style="left:892px;top:575px;width:38px;height:25px;line-height:27px;background:#f0f0f0"><span style="color:#1515b5">负</span></div>
<div class="dc cj" style="left:931px;top:575px;width:38px;height:25px;line-height:27px;background:#f0f0f0"><span style="color:#1515b5">输</span></div>
<div class="dc cj" style="left:970px;top:575px;width:59px;height:25px;line-height:27px;background:#f0f0f0"><span style="color:#1515b5">小</span></div>
<div class="dc cj" style="left:3px;top:601px;width:80px;height:25px;line-height:27px;background:#08a6a3"><span class="tw">球会友谊</span></div>
<div class="dc" style="left:84px;top:601px;width:77px;height:25px;line-height:27px;background:#fff">25-07-26</div>
<div class="dc cj" style="left:162px;top:601px;width:111px;height:25px;line-height:27px;background:#fff"><span class="g">佛罗伦萨</span></div>
<div class="dc" style="left:274px;top:601px;width:92px;height:25px;line-height:27px;background:#fff"><span style="color:#cc2020">2-0</span>(1-0)</div>
<div class="dc" style="left:367px;top:601px;width:39px;height:25px;line-height:27px;background:#fff">10-3</div>
<div class="dc cj" style="left:407px;top:601px;width:89px;height:25px;line-height:27px;background:#fff"><span class="">凯勒雷斯</span></div>
<div class="dc" style="left:497px;top:601px;width:44px;height:25px;line-height:27px;background:#fdf9f5">0.72</div>
<div class="dc cj" style="left:542px;top:601px;width:97px;height:25px;line-height:27px;background:#fdf9f5">一/球半</div>
<div class="dc" style="left:640px;top:601px;width:46px;height:25px;line-height:27px;background:#fdf9f5">1.11</div>
<div class="dc" style="left:687px;top:601px;width:67px;height:25px;line-height:27px;background:#eff6fb">1.37</div>
<div class="dc" style="left:755px;top:601px;width:67px;height:25px;line-height:27px;background:#eff6fb">4.60</div>
<div class="dc" style="left:823px;top:601px;width:68px;height:25px;line-height:27px;background:#eff6fb">7.36</div>
<div class="dc cj" style="left:892px;top:601px;width:38px;height:25px;line-height:27px;background:#fff"><span style="color:#cc2020">胜</span></div>
<div class="dc cj" style="left:931px;top:601px;width:38px;height:25px;line-height:27px;background:#fff"><span style="color:#cc2020">赢</span></div>
<div class="dc cj" style="left:970px;top:601px;width:59px;height:25px;line-height:27px;background:#fff"><span style="color:#1515b5">小</span></div>
<div class="dc cj" style="left:3px;top:627px;width:80px;height:25px;line-height:27px;background:#08a6a3"><span class="tw">球会友谊</span></div>
<div class="dc" style="left:84px;top:627px;width:77px;height:25px;line-height:27px;background:#f0f0f0">25-07-25</div>
<div class="dc cj" style="left:162px;top:627px;width:111px;height:25px;line-height:27px;background:#f0f0f0"><span class="">格罗瑟托</span></div>
<div class="dc" style="left:274px;top:627px;width:92px;height:25px;line-height:27px;background:#f0f0f0"><span style="color:#cc2020">0-3</span>(0-2)</div>
<div class="dc" style="left:367px;top:627px;width:39px;height:25px;line-height:27px;background:#f0f0f0">0-12</div>
<div class="dc cj" style="left:407px;top:627px;width:89px;height:25px;line-height:27px;background:#f0f0f0"><span class="g">佛罗伦萨</span></div>
<div class="dc" style="left:497px;top:627px;width:44px;height:25px;line-height:27px;background:#fdf9f5">0.82</div>
<div class="dc cj" style="left:542px;top:627px;width:97px;height:25px;line-height:27px;background:#fdf9f5">受四球</div>
<div class="dc" style="left:640px;top:627px;width:46px;height:25px;line-height:27px;background:#fdf9f5">0.94</div>
<div class="dc" style="left:687px;top:627px;width:67px;height:25px;line-height:27px;background:#eff6fb">24.12</div>
<div class="dc" style="left:755px;top:627px;width:67px;height:25px;line-height:27px;background:#eff6fb">16.15</div>
<div class="dc" style="left:823px;top:627px;width:68px;height:25px;line-height:27px;background:#eff6fb">1.03</div>
<div class="dc cj" style="left:892px;top:627px;width:38px;height:25px;line-height:27px;background:#f0f0f0"><span style="color:#cc2020">胜</span></div>
<div class="dc cj" style="left:931px;top:627px;width:38px;height:25px;line-height:27px;background:#f0f0f0"><span style="color:#1515b5">输</span></div>
<div class="dc cj" style="left:970px;top:627px;width:59px;height:25px;line-height:27px;background:#f0f0f0"><span style="color:#1515b5">小</span></div>
<div class="dc cj" style="left:3px;top:653px;width:80px;height:25px;line-height:27px;background:#0887fa"><span class="tw">意甲</span></div>
<div class="dc" style="left:84px;top:653px;width:77px;height:25px;line-height:27px;background:#fff">25-05-26</div>
<div class="dc cj" style="left:162px;top:653px;width:111px;height:25px;line-height:27px;background:#fff"><span class=""><b class="rc">1</b>乌迪内斯</span></div>
<div class="dc" style="left:274px;top:653px;width:92px;height:25px;line-height:27px;background:#fff"><span style="color:#cc2020">2-3</span>(1-0)</div>
<div class="dc" style="left:367px;top:653px;width:39px;height:25px;line-height:27px;background:#fff">2-8</div>
<div class="dc cj" style="left:407px;top:653px;width:89px;height:25px;line-height:27px;background:#fff"><span class="g">佛罗伦萨</span></div>
<div class="dc" style="left:497px;top:653px;width:44px;height:25px;line-height:27px;background:#fdf9f5">0.81</div>
<div class="dc cj" style="left:542px;top:653px;width:97px;height:25px;line-height:27px;background:#fdf9f5">受平/半</div>
<div class="dc" style="left:640px;top:653px;width:46px;height:25px;line-height:27px;background:#fdf9f5">1.08</div>
<div class="dc" style="left:687px;top:653px;width:67px;height:25px;line-height:27px;background:#eff6fb">3.18</div>
<div class="dc" style="left:755px;top:653px;width:67px;height:25px;line-height:27px;background:#eff6fb">3.39</div>
<div class="dc" style="left:823px;top:653px;width:68px;height:25px;line-height:27px;background:#eff6fb">2.26</div>
<div class="dc cj" style="left:892px;top:653px;width:38px;height:25px;line-height:27px;background:#fff"><span style="color:#cc2020">胜</span></div>
<div class="dc cj" style="left:931px;top:653px;width:38px;height:25px;line-height:27px;background:#fff"><span style="color:#cc2020">赢</span></div>
<div class="dc cj" style="left:970px;top:653px;width:59px;height:25px;line-height:27px;background:#fff"><span style="color:#cc2020">大</span></div>
<div class="dc cj" style="left:3px;top:679px;width:80px;height:25px;line-height:27px;background:#0887fa"><span class="tw">意甲</span></div>
<div class="dc" style="left:84px;top:679px;width:77px;height:25px;line-height:27px;background:#f0f0f0">25-05-19</div>
<div class="dc cj" style="left:162px;top:679px;width:111px;height:25px;line-height:27px;background:#f0f0f0"><span class="g">佛罗伦萨</span></div>
<div class="dc" style="left:274px;top:679px;width:92px;height:25px;line-height:27px;background:#f0f0f0"><span style="color:#cc2020">3-2</span>(1-0)</div>
<div class="dc" style="left:367px;top:679px;width:39px;height:25px;line-height:27px;background:#f0f0f0">2-4</div>
<div class="dc cj" style="left:407px;top:679px;width:89px;height:25px;line-height:27px;background:#f0f0f0"><span class="">博洛尼亚<b class="rc">1</b></span></div>
<div class="dc" style="left:497px;top:679px;width:44px;height:25px;line-height:27px;background:#fdf9f5">1.12</div>
<div class="dc cj" style="left:542px;top:679px;width:97px;height:25px;line-height:27px;background:#fdf9f5">平手</div>
<div class="dc" style="left:640px;top:679px;width:46px;height:25px;line-height:27px;background:#fdf9f5">0.78</div>
<div class="dc" style="left:687px;top:679px;width:67px;height:25px;line-height:27px;background:#eff6fb">2.95</div>
<div class="dc" style="left:755px;top:679px;width:67px;height:25px;line-height:27px;background:#eff6fb">3.07</div>
<div class="dc" style="left:823px;top:679px;width:68px;height:25px;line-height:27px;background:#eff6fb">2.55</div>
<div class="dc cj" style="left:892px;top:679px;width:38px;height:25px;line-height:27px;background:#f0f0f0"><span style="color:#cc2020">胜</span></div>
<div class="dc cj" style="left:931px;top:679px;width:38px;height:25px;line-height:27px;background:#f0f0f0"><span style="color:#cc2020">赢</span></div>
<div class="dc cj" style="left:970px;top:679px;width:59px;height:25px;line-height:27px;background:#f0f0f0"><span style="color:#cc2020">大</span></div>
<div class="dc sm" style="left:3px;top:705px;width:1026px;height:25px;line-height:26px;background:#fff">近<span style="color:#cc2020">10</span>场,胜6平3负1, 胜率:<span style="color:#cc2020">60%</span> 让胜率:<span style="color:#cc2020">60%</span> 大率:<span style="color:#cc2020">40%</span> 单率:<span style="color:#cc2020">50%</span></div>
<div style="left:2px;top:405px;width:1028px;height:1px;background:#c2c2c2"></div>
<div style="left:2px;top:444px;width:1028px;height:1px;background:#c2c2c2"></div>
<div style="left:2px;top:470px;width:1028px;height:1px;background:#c2c2c2"></div>
<div style="left:2px;top:496px;width:1028px;height:1px;background:#c2c2c2"></div>
<div style="left:2px;top:522px;width:1028px;height:1px;background:#c2c2c2"></div>
<div style="left:2px;top:548px;width:1028px;height:1px;background:#c2c2c2"></div>
<div style="left:2px;top:574px;width:1028px;height:1px;background:#c2c2c2"></div>
<div style="left:2px;top:600px;width:1028px;height:1px;background:#c2c2c2"></div>
<div style="left:2px;top:626px;width:1028px;height:1px;background:#c2c2c2"></div>
<div style="left:2px;top:652px;width:1028px;height:1px;background:#c2c2c2"></div>
<div style="left:2px;top:678px;width:1028px;height:1px;background:#c2c2c2"></div>
<div style="left:2px;top:704px;width:1028px;height:1px;background:#c2c2c2"></div>
<div style="left:2px;top:730px;width:1028px;height:1px;background:#c2c2c2"></div>
<div style="left:496px;top:425px;width:534px;height:1px;background:#c2c2c2"></div>
<div style="left:2px;top:405px;width:1px;height:326px;background:#c2c2c2"></div>
<div style="left:83px;top:405px;width:1px;height:299px;background:#c2c2c2"></div>
<div style="left:161px;top:405px;width:1px;height:299px;background:#c2c2c2"></div>
<div style="left:273px;top:405px;width:1px;height:299px;background:#c2c2c2"></div>
<div style="left:366px;top:405px;width:1px;height:299px;background:#c2c2c2"></div>
<div style="left:406px;top:405px;width:1px;height:299px;background:#c2c2c2"></div>
<div style="left:496px;top:405px;width:1px;height:299px;background:#c2c2c2"></div>
<div style="left:541px;top:425px;width:1px;height:279px;background:#c2c2c2"></div>
<div style="left:639px;top:425px;width:1px;height:279px;background:#c2c2c2"></div>
<div style="left:686px;top:405px;width:1px;height:299px;background:#c2c2c2"></div>
<div style="left:754px;top:425px;width:1px;height:279px;background:#c2c2c2"></div>
<div style="left:822px;top:425px;width:1px;height:279px;background:#c2c2c2"></div>
<div style="left:891px;top:405px;width:1px;height:299px;background:#c2c2c2"></div>
<div style="left:930px;top:425px;width:1px;height:279px;background:#c2c2c2"></div>
<div style="left:969px;top:425px;width:1px;height:279px;background:#c2c2c2"></div>
<div style="left:1029px;top:405px;width:1px;height:326px;background:#c2c2c2"></div>
<div style="left:2px;top:444px;width:82px;height:27px;background:#cc74d8"></div>
<div style="left:3px;top:445px;width:80px;height:25px;display:flex;align-items:center;justify-content:center;padding-top:2px"><span class="tw cj">欧会杯</span></div>
<div style="left:2px;top:470px;width:82px;height:27px;background:#0887fa"></div>
<div style="left:3px;top:471px;width:80px;height:25px;display:flex;align-items:center;justify-content:center;padding-top:2px"><span class="tw cj">意甲</span></div>
<div style="left:2px;top:496px;width:82px;height:27px;background:#cc74d8"></div>
<div style="left:3px;top:497px;width:80px;height:25px;display:flex;align-items:center;justify-content:center;padding-top:2px"><span class="tw cj">欧会杯</span></div>
<div style="left:2px;top:522px;width:82px;height:27px;background:#08a6a3"></div>
<div style="left:3px;top:523px;width:80px;height:25px;display:flex;align-items:center;justify-content:center;padding-top:2px"><span class="tw cj">球会友谊</span></div>
<div style="left:2px;top:548px;width:82px;height:27px;background:#08a6a3"></div>
<div style="left:3px;top:549px;width:80px;height:25px;display:flex;align-items:center;justify-content:center;padding-top:2px"><span class="tw cj">球会友谊</span></div>
<div style="left:2px;top:574px;width:82px;height:27px;background:#08a6a3"></div>
<div style="left:3px;top:575px;width:80px;height:25px;display:flex;align-items:center;justify-content:center;padding-top:2px"><span class="tw cj">球会友谊</span></div>
<div style="left:2px;top:600px;width:82px;height:27px;background:#08a6a3"></div>
<div style="left:3px;top:601px;width:80px;height:25px;display:flex;align-items:center;justify-content:center;padding-top:2px"><span class="tw cj">球会友谊</span></div>
<div style="left:2px;top:626px;width:82px;height:27px;background:#08a6a3"></div>
<div style="left:3px;top:627px;width:80px;height:25px;display:flex;align-items:center;justify-content:center;padding-top:2px"><span class="tw cj">球会友谊</span></div>
<div style="left:2px;top:652px;width:82px;height:27px;background:#0887fa"></div>
<div style="left:3px;top:653px;width:80px;height:25px;display:flex;align-items:center;justify-content:center;padding-top:2px"><span class="tw cj">意甲</span></div>
<div style="left:2px;top:678px;width:82px;height:27px;background:#0887fa"></div>
<div style="left:3px;top:679px;width:80px;height:25px;display:flex;align-items:center;justify-content:center;padding-top:2px"><span class="tw cj">意甲</span></div>
<div style="left:2px;top:444px;width:82px;height:1px;background:#a6c6f6"></div>
<div style="left:2px;top:470px;width:82px;height:1px;background:#a6c6f6"></div>
<div style="left:2px;top:496px;width:82px;height:1px;background:#a6c6f6"></div>
<div style="left:2px;top:522px;width:82px;height:1px;background:#a6c6f6"></div>
<div style="left:2px;top:548px;width:82px;height:1px;background:#a6c6f6"></div>
<div style="left:2px;top:574px;width:82px;height:1px;background:#a6c6f6"></div>
<div style="left:2px;top:600px;width:82px;height:1px;background:#a6c6f6"></div>
<div style="left:2px;top:626px;width:82px;height:1px;background:#a6c6f6"></div>
<div style="left:2px;top:652px;width:82px;height:1px;background:#a6c6f6"></div>
<div style="left:2px;top:678px;width:82px;height:1px;background:#a6c6f6"></div>
<div style="left:2px;top:704px;width:82px;height:1px;background:#a6c6f6"></div>
<div style="left:2px;top:444px;width:1px;height:261px;background:rgba(255,255,255,0.5)"></div>
<div style="left:83px;top:444px;width:1px;height:261px;background:rgba(255,255,255,0.5)"></div></body></html>
